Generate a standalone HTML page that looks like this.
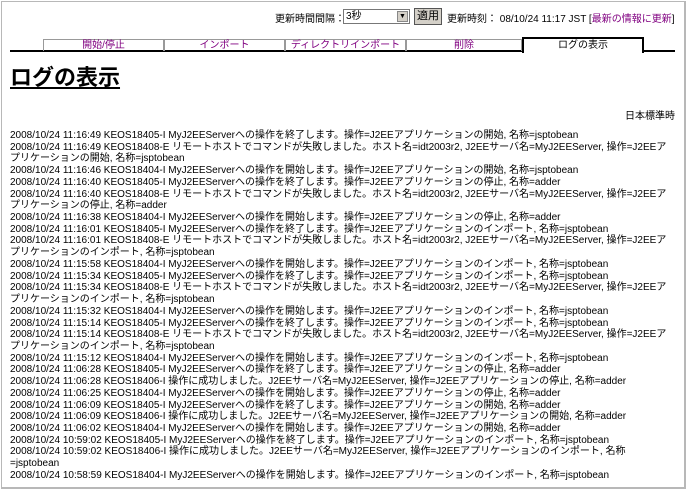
<!DOCTYPE html>
<html><head><meta charset="utf-8"><style>
body{margin:0;width:687px;height:491px;background:#fff;overflow:hidden;font-family:"Liberation Sans","Noto Sans CJK JP",sans-serif;color:#000}
.frame{position:absolute;left:1px;top:1px;width:682px;height:485px;border:1px solid #b8b8b8;border-right-width:2px;border-bottom-width:2px}
.top{position:absolute;top:10px;font-size:10px;white-space:nowrap}
a{color:#800080;text-decoration:none}
.sel{position:absolute;left:343px;top:9px;width:67px;height:15px;border:1px solid #777;background:#fff;font-size:10px;box-sizing:border-box;padding-left:2px;line-height:13px}
.sel i{position:absolute;right:1px;top:1px;width:11px;height:11px;background:#d4d0c8;border:1px solid #888;box-sizing:border-box;font-style:normal;font-size:7px;text-align:center;line-height:10px}
.btn{position:absolute;left:414px;top:8px;width:28px;height:17px;background:#d4d0c8;border:1px solid #555;box-sizing:border-box;font-size:11px;text-align:center;line-height:15px}
.line{position:absolute;left:10px;top:50px;width:665px;height:2px;background:#000}
.tab{position:absolute;top:39px;height:12px;border:1px solid #999;border-bottom:none;font-size:10px;text-align:center;line-height:12px;box-sizing:border-box}
.act{position:absolute;left:522px;top:37px;width:122px;height:16px;border:2px solid #000;border-bottom:none;background:#fff;font-size:10px;text-align:center;line-height:13px;box-sizing:border-box}
h1{position:absolute;left:10px;top:64px;margin:0;font-size:22px;font-weight:bold;text-decoration:underline;line-height:28px}
.tz{position:absolute;right:12px;top:107px;font-size:10px}
.log{position:absolute;left:10px;top:130px;font-size:10px;line-height:11.72px;white-space:nowrap}
</style></head><body>
<div class="frame"></div>
<div class="top" style="left:275px">更新時間間隔：</div>
<div class="sel">3秒<i>▼</i></div>
<div class="btn">適用</div>
<div class="top" style="left:447px">更新時刻： 08/10/24 11:17 JST [<a>最新の情報に更新</a>]</div>
<div class="line"></div>
<div class="tab" style="left:43px;width:121px"><a>開始/停止</a></div>
<div class="tab" style="left:164px;width:121px"><a>インポート</a></div>
<div class="tab" style="left:285px;width:121px"><a>ディレクトリインポート</a></div>
<div class="tab" style="left:406px;width:116px"><a>削除</a></div>
<div class="act">ログの表示</div>
<h1>ログの表示</h1>
<div class="tz">日本標準時</div>
<div class="log">
2008/10/24 11:16:49 KEOS18405-I MyJ2EEServerへの操作を終了します。操作=J2EEアプリケーションの開始, 名称=jsptobean<br>
2008/10/24 11:16:49 KEOS18408-E リモートホストでコマンドが失敗しました。ホスト名=idt2003r2, J2EEサーバ名=MyJ2EEServer, 操作=J2EEア<br>
プリケーションの開始, 名称=jsptobean<br>
2008/10/24 11:16:46 KEOS18404-I MyJ2EEServerへの操作を開始します。操作=J2EEアプリケーションの開始, 名称=jsptobean<br>
2008/10/24 11:16:40 KEOS18405-I MyJ2EEServerへの操作を終了します。操作=J2EEアプリケーションの停止, 名称=adder<br>
2008/10/24 11:16:40 KEOS18408-E リモートホストでコマンドが失敗しました。ホスト名=idt2003r2, J2EEサーバ名=MyJ2EEServer, 操作=J2EEア<br>
プリケーションの停止, 名称=adder<br>
2008/10/24 11:16:38 KEOS18404-I MyJ2EEServerへの操作を開始します。操作=J2EEアプリケーションの停止, 名称=adder<br>
2008/10/24 11:16:01 KEOS18405-I MyJ2EEServerへの操作を終了します。操作=J2EEアプリケーションのインポート, 名称=jsptobean<br>
2008/10/24 11:16:01 KEOS18408-E リモートホストでコマンドが失敗しました。ホスト名=idt2003r2, J2EEサーバ名=MyJ2EEServer, 操作=J2EEア<br>
プリケーションのインポート, 名称=jsptobean<br>
2008/10/24 11:15:58 KEOS18404-I MyJ2EEServerへの操作を開始します。操作=J2EEアプリケーションのインポート, 名称=jsptobean<br>
2008/10/24 11:15:34 KEOS18405-I MyJ2EEServerへの操作を終了します。操作=J2EEアプリケーションのインポート, 名称=jsptobean<br>
2008/10/24 11:15:34 KEOS18408-E リモートホストでコマンドが失敗しました。ホスト名=idt2003r2, J2EEサーバ名=MyJ2EEServer, 操作=J2EEア<br>
プリケーションのインポート, 名称=jsptobean<br>
2008/10/24 11:15:32 KEOS18404-I MyJ2EEServerへの操作を開始します。操作=J2EEアプリケーションのインポート, 名称=jsptobean<br>
2008/10/24 11:15:14 KEOS18405-I MyJ2EEServerへの操作を終了します。操作=J2EEアプリケーションのインポート, 名称=jsptobean<br>
2008/10/24 11:15:14 KEOS18408-E リモートホストでコマンドが失敗しました。ホスト名=idt2003r2, J2EEサーバ名=MyJ2EEServer, 操作=J2EEア<br>
プリケーションのインポート, 名称=jsptobean<br>
2008/10/24 11:15:12 KEOS18404-I MyJ2EEServerへの操作を開始します。操作=J2EEアプリケーションのインポート, 名称=jsptobean<br>
2008/10/24 11:06:28 KEOS18405-I MyJ2EEServerへの操作を終了します。操作=J2EEアプリケーションの停止, 名称=adder<br>
2008/10/24 11:06:28 KEOS18406-I 操作に成功しました。J2EEサーバ名=MyJ2EEServer, 操作=J2EEアプリケーションの停止, 名称=adder<br>
2008/10/24 11:06:25 KEOS18404-I MyJ2EEServerへの操作を開始します。操作=J2EEアプリケーションの停止, 名称=adder<br>
2008/10/24 11:06:09 KEOS18405-I MyJ2EEServerへの操作を終了します。操作=J2EEアプリケーションの開始, 名称=adder<br>
2008/10/24 11:06:09 KEOS18406-I 操作に成功しました。J2EEサーバ名=MyJ2EEServer, 操作=J2EEアプリケーションの開始, 名称=adder<br>
2008/10/24 11:06:02 KEOS18404-I MyJ2EEServerへの操作を開始します。操作=J2EEアプリケーションの開始, 名称=adder<br>
2008/10/24 10:59:02 KEOS18405-I MyJ2EEServerへの操作を終了します。操作=J2EEアプリケーションのインポート, 名称=jsptobean<br>
2008/10/24 10:59:02 KEOS18406-I 操作に成功しました。J2EEサーバ名=MyJ2EEServer, 操作=J2EEアプリケーションのインポート, 名称<br>
=jsptobean<br>
2008/10/24 10:58:59 KEOS18404-I MyJ2EEServerへの操作を開始します。操作=J2EEアプリケーションのインポート, 名称=jsptobean
</div>
</body></html>
